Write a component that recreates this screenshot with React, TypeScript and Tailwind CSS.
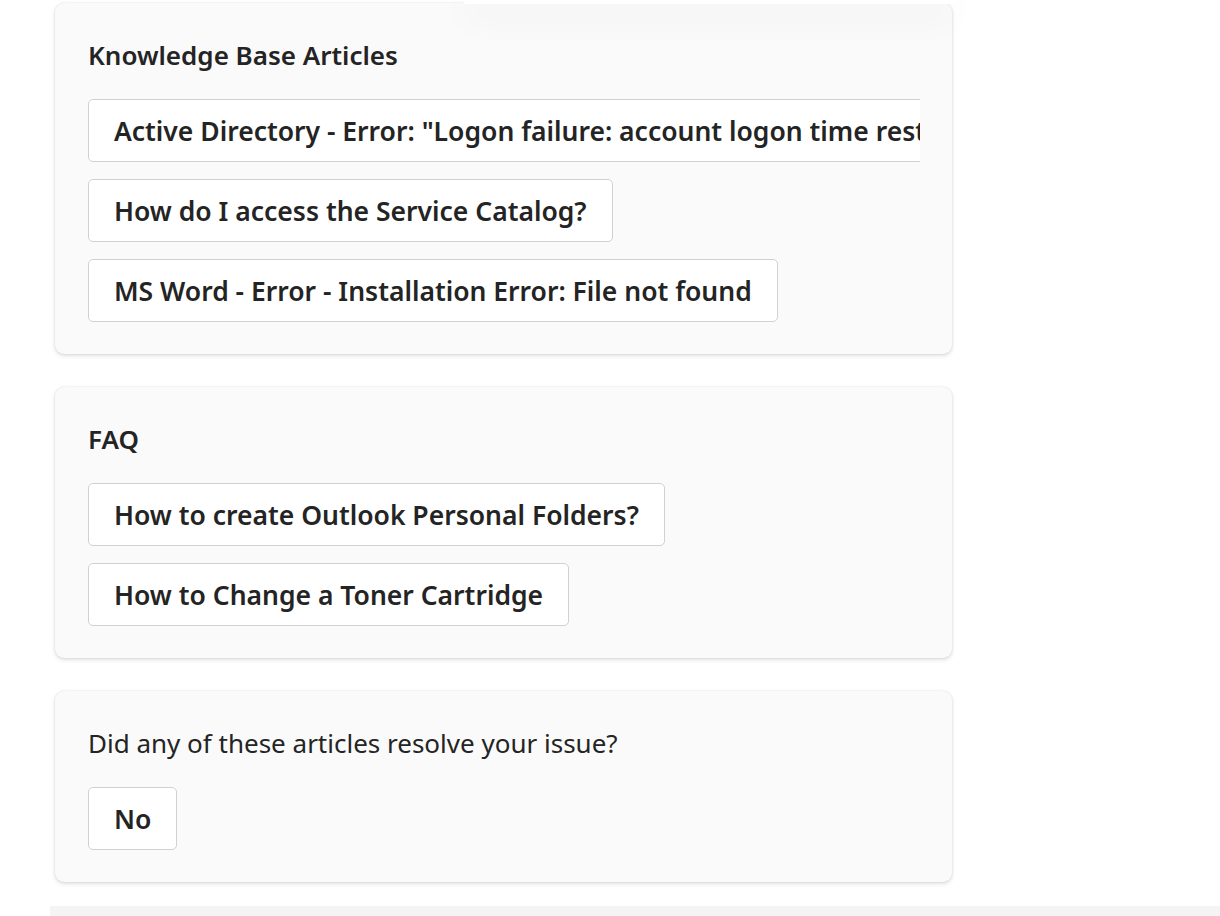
import React from "react";

const kbArticles = [
  'Active Directory - Error: "Logon failure: account logon time restriction violation"',
  "How do I access the Service Catalog?",
  "MS Word - Error - Installation Error: File not found",
];

const faqs = ["How to create Outlook Personal Folders?", "How to Change a Toner Cartridge"];

function Choice({ label }: { label: string }) {
  return (
    <button className="flex h-[63px] shrink-0 items-center whitespace-nowrap rounded-[5px] border border-[#d1d1d1] bg-white px-[25px] pt-px text-[26.5px] font-semibold leading-none text-[#242424]">
      {label}
    </button>
  );
}

function Card({ title, items, plain }: { title: string; items: string[]; plain?: boolean }) {
  return (
    <div className="rounded-[9px] bg-[#fafafa] pl-[33px] pr-[32px] pt-[38px] pb-[32px] shadow-[0_0_2px_rgba(0,0,0,0.12),0_2px_4px_rgba(0,0,0,0.12)]">
      <h3
        className={`text-[26px] leading-[28px] text-[#242424] ${plain ? "font-normal" : "font-semibold"}`}
      >
        {title}
      </h3>
      <div className="mt-[30px] flex flex-col items-start gap-[17px] overflow-hidden">
        {items.map((item) => (
          <Choice key={item} label={item} />
        ))}
      </div>
    </div>
  );
}

export default function App() {
  return (
    <div className="relative min-h-[916px] overflow-hidden bg-white font-['Noto_Sans',sans-serif]">
      {/* dropdown sitting above the cards */}
      <div className="absolute left-[463px] top-0 z-10 h-[4px] w-[492px] rounded-b-[8px] bg-white shadow-[0_8px_36px_rgba(0,0,0,0.16)]" />

      <div className="ml-[55px] flex w-[897px] flex-col gap-[33px] pt-[3px]">
        <Card title="Knowledge Base Articles" items={kbArticles} />
        <Card title="FAQ" items={faqs} />
        <Card title="Did any of these articles resolve your issue?" items={["No"]} plain />
      </div>

      <div className="ml-[50px] mt-[24px] h-[20px] bg-[#f4f4f4]" />
    </div>
  );
}
